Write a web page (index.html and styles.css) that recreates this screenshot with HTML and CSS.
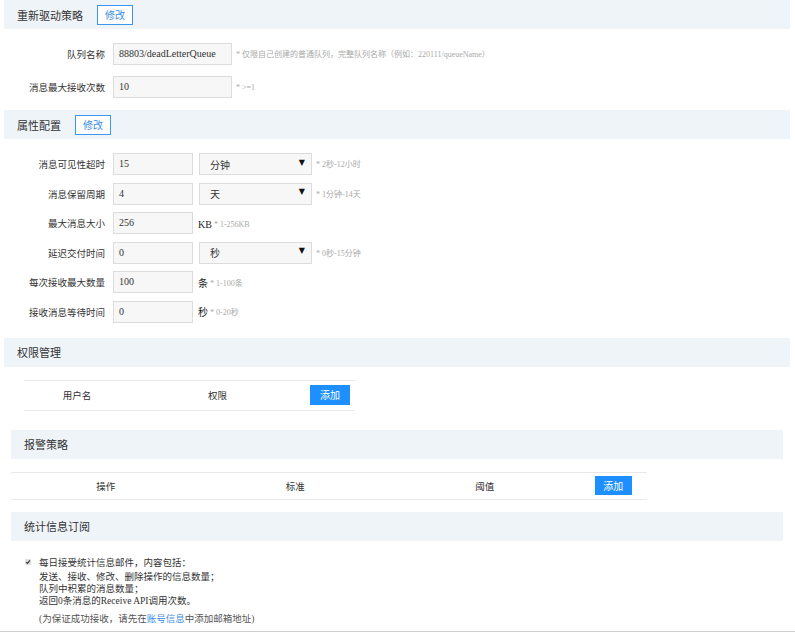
FILE: index.html
```html
<!DOCTYPE html>
<html lang="zh-CN">
<head>
<meta charset="utf-8">
<title>队列设置</title>
<link rel="stylesheet" href="styles.css">
</head>
<body>
<div class="page">

  <div class="sec-head wide">
    <h2 class="sec-title">重新驱动策略</h2>
    <button class="btn-edit">修改</button>
  </div>
  <div class="form form-redrive">
    <div class="row">
      <span class="label">队列名称</span>
      <span class="input w-long">88803/deadLetterQueue</span>
      <span class="hint">* 仅限自己创建的普通队列，完整队列名称（例如：220111/queueName）</span>
    </div>
    <div class="row">
      <span class="label">消息最大接收次数</span>
      <span class="input w-long">10</span>
      <span class="hint">* &gt;=1</span>
    </div>
  </div>

  <div class="sec-head wide">
    <h2 class="sec-title">属性配置</h2>
    <button class="btn-edit">修改</button>
  </div>
  <div class="form form-attr">
    <div class="row">
      <span class="label">消息可见性超时</span>
      <span class="input w-short">15</span>
      <span class="select"><span>分钟</span><span class="arrow">▼</span></span>
      <span class="hint">* 2秒-12小时</span>
    </div>
    <div class="row">
      <span class="label">消息保留周期</span>
      <span class="input w-short">4</span>
      <span class="select"><span>天</span><span class="arrow">▼</span></span>
      <span class="hint">* 1分钟-14天</span>
    </div>
    <div class="row">
      <span class="label">最大消息大小</span>
      <span class="input w-short">256</span>
      <span class="unit">KB</span>
      <span class="hint tight">* 1-256KB</span>
    </div>
    <div class="row">
      <span class="label">延迟交付时间</span>
      <span class="input w-short">0</span>
      <span class="select"><span>秒</span><span class="arrow">▼</span></span>
      <span class="hint">* 0秒-15分钟</span>
    </div>
    <div class="row">
      <span class="label">每次接收最大数量</span>
      <span class="input w-short">100</span>
      <span class="unit">条</span>
      <span class="hint tight">* 1-100条</span>
    </div>
    <div class="row">
      <span class="label">接收消息等待时间</span>
      <span class="input w-short">0</span>
      <span class="unit">秒</span>
      <span class="hint tight">* 0-20秒</span>
    </div>
  </div>

  <div class="sec-head wide">
    <h2 class="sec-title">权限管理</h2>
  </div>
  <div class="table perm-table">
    <span class="cell">用户名</span>
    <span class="cell">权限</span>
    <span class="cell"><button class="btn-add">添加</button></span>
  </div>

  <div class="sec-head inset">
    <h2 class="sec-title">报警策略</h2>
  </div>
  <div class="table alarm-table">
    <span class="cell">操作</span>
    <span class="cell">标准</span>
    <span class="cell">阈值</span>
    <span class="cell"><button class="btn-add small">添加</button></span>
  </div>

  <div class="sec-head inset">
    <h2 class="sec-title">统计信息订阅</h2>
  </div>
  <div class="stats">
    <div class="check-line">
      <span class="checkbox"><svg viewBox="0 0 6 6" width="6" height="6"><path d="M1.2 3.1 L2.5 4.4 L4.9 1.4" fill="none" stroke="#333" stroke-width="1.1"/></svg></span>
      <span>每日接受统计信息邮件，内容包括：</span>
    </div>
    <div class="sub-lines">
      <div>发送、接收、修改、删除操作的信息数量；</div>
      <div>队列中积累的消息数量；</div>
      <div>返回0条消息的Receive API调用次数。</div>
    </div>
    <div class="note">(为保证成功接收，请先在<a class="link" href="#">账号信息</a>中添加邮箱地址)</div>
  </div>

</div>
</body>
</html>
```

FILE: styles.css
```css
html, body {
  margin: 0;
  padding: 0;
  background: #fff;
}

body {
  font-family: "Liberation Serif", "Noto Sans CJK SC", serif;
  color: #333;
}

.page {
  width: 795px;
  border-bottom: 1px solid #cfcfcf;
}

/* section headers */
.sec-head {
  display: flex;
  align-items: center;
  height: 29px;
  background: #eff4f9;
  box-sizing: border-box;
}

.sec-head.wide {
  margin: 0 5px 0 4px;
  padding-left: 13px;
}

.sec-head.inset {
  margin: 0 12px 0 11px;
  padding-left: 13px;
}

.sec-title {
  margin: 0;
  font-family: "Noto Sans CJK SC", sans-serif;
  font-size: 11px;
  font-weight: normal;
  color: #333;
  line-height: 14px;
}

.btn-edit {
  margin-left: 14px;
  width: 36px;
  height: 20px;
  padding: 0;
  border: 1px solid #3b95f2;
  background: #fff;
  color: #3a8ee8;
  font-family: "Noto Sans CJK SC", sans-serif;
  font-size: 10px;
  line-height: 18px;
}

/* forms */
.form {
  display: flex;
  flex-direction: column;
}

.form-redrive {
  padding: 14px 0 12px;
  gap: 11px;
}

.form-attr {
  padding: 14px 0 15px;
  gap: 7.6px;
}

.row {
  display: flex;
  align-items: center;
  height: 22px;
}

.label {
  width: 105px;
  text-align: right;
  font-family: "Noto Sans CJK SC", sans-serif;
  font-size: 9.5px;
  color: #333;
  line-height: 12px;
}

.input {
  box-sizing: border-box;
  height: 22px;
  margin-left: 8px;
  padding: 0 5px;
  border: 1px solid #dcdcdc;
  background: #f7f7f7;
  font-size: 10px;
  line-height: 20px;
  color: #333;
  white-space: nowrap;
}

.w-long { width: 119px; }
.w-short { width: 80px; }

.select {
  box-sizing: border-box;
  display: flex;
  align-items: center;
  justify-content: space-between;
  width: 113px;
  height: 22px;
  margin-left: 6px;
  padding: 0 6px 0 10px;
  border: 1px solid #dcdcdc;
  background: #f7f7f7;
  font-family: "Noto Sans CJK SC", sans-serif;
  font-size: 10px;
  color: #333;
}

.arrow {
  font-family: "DejaVu Sans", sans-serif;
  font-size: 8px;
  color: #111;
  line-height: 8px;
  margin-top: -3px;
}

.hint {
  margin-left: 4px;
  font-size: 8px;
  color: #a9a9a9;
  white-space: nowrap;
  line-height: 10px;
  margin-top: 2px;
}

.hint.tight {
  margin-left: 2px;
  margin-top: 3px;
}

.unit {
  margin-left: 5px;
  font-size: 10px;
  color: #222;
  margin-top: 3px;
  line-height: 12px;
}

/* tables */
.table {
  display: grid;
  align-items: center;
  border-top: 1px solid #e8e8e8;
  border-bottom: 1px solid #e8e8e8;
  font-family: "Noto Sans CJK SC", sans-serif;
  font-size: 9.5px;
  color: #333;
}

.cell {
  display: flex;
  justify-content: center;
  align-items: center;
}

.perm-table {
  width: 331px;
  height: 31px;
  box-sizing: border-box;
  margin: 13px 0 19px 24px;
  grid-template-columns: 106px 175px 50px;
}

.alarm-table {
  width: 636px;
  height: 28px;
  box-sizing: border-box;
  margin: 13px 0 12px 11px;
  grid-template-columns: 189.5px 189.5px 189.5px 67.5px;
}

.btn-add {
  width: 40px;
  height: 20px;
  padding: 0;
  border: none;
  background: #1e8fff;
  color: #fff;
  font-family: "Noto Sans CJK SC", sans-serif;
  font-size: 10px;
  line-height: 20px;
}

.btn-add.small {
  width: 37px;
  height: 19px;
  line-height: 19px;
}

/* stats */
.stats {
  padding: 14px 0 6px 25px;
  font-family: "Liberation Serif", "Noto Sans CJK SC", serif;
  font-size: 9.5px;
  color: #333;
}

.check-line {
  display: flex;
  align-items: center;
  height: 14px;
}

.checkbox {
  box-sizing: border-box;
  display: flex;
  align-items: center;
  justify-content: center;
  width: 6px;
  height: 6px;
  margin-right: 8px;
  background: #dedede;
  border-radius: 1px;
}

.sub-lines {
  margin-top: 2px;
  padding-left: 14px;
  line-height: 12px;
}

.note {
  margin-top: 6px;
  padding-left: 14px;
  line-height: 12px;
  color: #555;
}

.link {
  color: #3c8de0;
  text-decoration: none;
}
```
